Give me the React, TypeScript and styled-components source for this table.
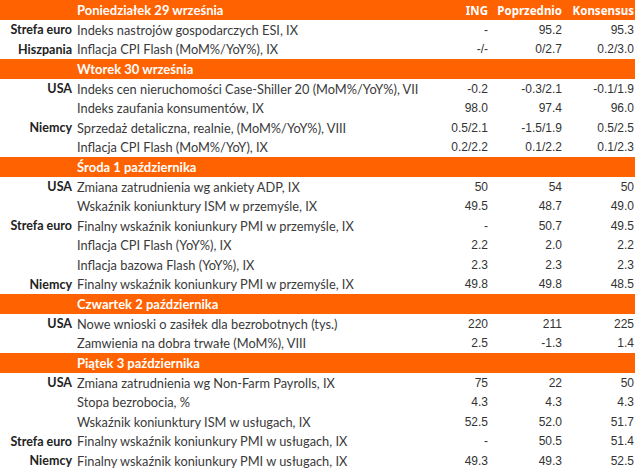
import React from 'react';
import styled, { createGlobalStyle } from 'styled-components';

type Row = { country?: string; name: string; ing: string; prev: string; cons: string };
type Day = { title: string; rows: Row[] };

const days: Day[] = [
  {
    title: 'Poniedziałek 29 września',
    rows: [
      { country: 'Strefa euro', name: 'Indeks nastrojów gospodarczych ESI, IX', ing: '-', prev: '95.2', cons: '95.3' },
      { country: 'Hiszpania', name: 'Inflacja CPI Flash (MoM%/YoY%), IX', ing: '-/-', prev: '0/2.7', cons: '0.2/3.0' },
    ],
  },
  {
    title: 'Wtorek 30 września',
    rows: [
      { country: 'USA', name: 'Indeks cen nieruchomości Case-Shiller 20 (MoM%/YoY%), VII', ing: '-0.2', prev: '-0.3/2.1', cons: '-0.1/1.9' },
      { name: 'Indeks zaufania konsumentów, IX', ing: '98.0', prev: '97.4', cons: '96.0' },
      { country: 'Niemcy', name: 'Sprzedaż detaliczna, realnie, (MoM%/YoY%), VIII', ing: '0.5/2.1', prev: '-1.5/1.9', cons: '0.5/2.5' },
      { name: 'Inflacja CPI Flash (MoM%/YoY), IX', ing: '0.2/2.2', prev: '0.1/2.2', cons: '0.1/2.3' },
    ],
  },
  {
    title: 'Środa 1 października',
    rows: [
      { country: 'USA', name: 'Zmiana zatrudnienia wg ankiety ADP, IX', ing: '50', prev: '54', cons: '50' },
      { name: 'Wskaźnik koniunktury ISM w przemyśle, IX', ing: '49.5', prev: '48.7', cons: '49.0' },
      { country: 'Strefa euro', name: 'Finalny wskaźnik koniunkury PMI w przemyśle, IX', ing: '-', prev: '50.7', cons: '49.5' },
      { name: 'Inflacja CPI Flash (YoY%), IX', ing: '2.2', prev: '2.0', cons: '2.2' },
      { name: 'Inflacja bazowa Flash (YoY%), IX', ing: '2.3', prev: '2.3', cons: '2.3' },
      { country: 'Niemcy', name: 'Finalny wskaźnik koniunkury PMI w przemyśle, IX', ing: '49.8', prev: '49.8', cons: '48.5' },
    ],
  },
  {
    title: 'Czwartek 2 października',
    rows: [
      { country: 'USA', name: 'Nowe wnioski o zasiłek dla bezrobotnych (tys.)', ing: '220', prev: '211', cons: '225' },
      { name: 'Zamwienia na dobra trwałe (MoM%), VIII', ing: '2.5', prev: '-1.3', cons: '1.4' },
    ],
  },
  {
    title: 'Piątek 3 października',
    rows: [
      { country: 'USA', name: 'Zmiana zatrudnienia wg Non-Farm Payrolls, IX', ing: '75', prev: '22', cons: '50' },
      { name: 'Stopa bezrobocia, %', ing: '4.3', prev: '4.3', cons: '4.3' },
      { name: 'Wskaźnik koniunktury ISM w usługach, IX', ing: '52.5', prev: '52.0', cons: '51.7' },
      { country: 'Strefa euro', name: 'Finalny wskaźnik koniunkury PMI w usługach, IX', ing: '-', prev: '50.5', cons: '51.4' },
      { country: 'Niemcy', name: 'Finalny wskaźnik koniunkury PMI w usługach, IX', ing: '49.3', prev: '49.3', cons: '52.5' },
    ],
  },
];

export default function App() {
  return (
    <>
      <GlobalStyle />
      <Table>
        {days.map((day, i) => (
          <React.Fragment key={day.title}>
            <HeaderRow>
              <span />
              <DayTitle>{day.title}</DayTitle>
              <HeadLabel>{i === 0 ? 'ING' : ''}</HeadLabel>
              <HeadLabel>{i === 0 ? 'Poprzednio' : ''}</HeadLabel>
              <HeadLabel>{i === 0 ? 'Konsensus' : ''}</HeadLabel>
            </HeaderRow>
            {day.rows.map((row, j) => (
              <DataRow key={j}>
                <Country>{row.country ?? ''}</Country>
                <Name>{row.name}</Name>
                <Value>{row.ing}</Value>
                <Value>{row.prev}</Value>
                <Value>{row.cons}</Value>
              </DataRow>
            ))}
          </React.Fragment>
        ))}
      </Table>
    </>
  );
}

const GlobalStyle = createGlobalStyle`
  html, body {
    margin: 0;
    padding: 0;
    background: #fff;
  }
`;

const Table = styled.div`
  width: 635px;
  display: flex;
  flex-direction: column;
  color: #333;
`;

const BaseRow = styled.div`
  display: grid;
  grid-template-columns: 72px 342px 74px 74px 72px;
  align-items: center;
  padding-right: 1px;
  white-space: nowrap;
`;

const HeaderRow = styled(BaseRow)`
  height: 20px;
  background: #ff6200;
  color: #fff;
`;

const DataRow = styled(BaseRow)`
  height: 19.5px;
`;

const DayTitle = styled.span`
  padding-left: 5px;
  font-family: Lato, 'Noto Sans', sans-serif;
  font-weight: 700;
  font-size: 13px;
`;

const HeadLabel = styled.span`
  text-align: right;
  font-family: 'Noto Sans', sans-serif;
  font-weight: 700;
  font-size: 11.5px;
`;

const Country = styled.span`
  text-align: right;
  font-family: Lato, 'Noto Sans', sans-serif;
  font-weight: 700;
  font-size: 12.5px;
  color: #222;
`;

const Name = styled.span`
  padding-left: 5px;
  font-family: Lato, 'Noto Sans', sans-serif;
  font-size: 12.8px;
  color: #3a3a3a;
`;

const Value = styled.span`
  text-align: right;
  font-family: 'Liberation Sans', Arial, sans-serif;
  font-size: 12px;
  color: #333;
`;
